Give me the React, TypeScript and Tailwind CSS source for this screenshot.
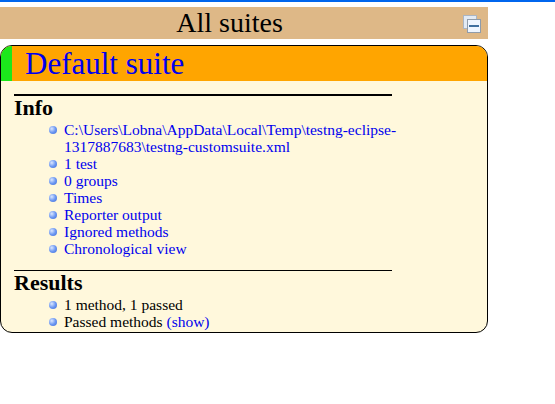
import React from "react"

const serif = { fontFamily: '"Liberation Serif", "Times New Roman", serif' }

function Bullet() {
  return (
    <span className="mt-[5px] mr-[7px] h-[8px] w-[8px] shrink-0 rounded-full bg-[radial-gradient(circle_at_35%_35%,#dbe7ff_0%,#6d98f2_50%,#3d6bd8_100%)]" />
  )
}

function Item({ children, link = true }: { children: React.ReactNode; link?: boolean }) {
  return (
    <li className="flex">
      <Bullet />
      <span className={link ? "text-[#0000ee]" : "text-black"}>{children}</span>
    </li>
  )
}

function CollapseIcon() {
  return (
    <svg width="18" height="18" viewBox="0 0 18 18">
      <rect x="0.5" y="0.5" width="13" height="13" fill="#e2eaf4" stroke="#aab5c3" />
      <rect x="4.5" y="4.5" width="13" height="13" fill="#eef5ff" stroke="#8f9cab" />
      <rect x="6" y="10" width="10" height="2" fill="#3f6f9f" />
    </svg>
  )
}

export default function App() {
  return (
    <div className="relative h-[404px] w-[555px] overflow-hidden bg-white" style={serif}>
      {/* focus line */}
      <div className="h-[2px] w-full bg-[#0066ee]" />

      {/* All suites bar */}
      <div className="mt-[5px] flex h-[32px] w-[488px] items-center bg-[#deb887]">
        <div className="flex-1 pr-[4px] text-center text-[28px] leading-none text-black">All suites</div>
        <div className="mr-[7px] mt-[2px]">
          <CollapseIcon />
        </div>
      </div>

      {/* Suite box */}
      <div className="mt-[6px] w-[488px] overflow-hidden rounded-[12px] border border-black bg-[#fff8dc]">
        <div className="flex h-[35px] items-stretch bg-[#ffa500]">
          <div className="w-[11px] bg-[#1ce81c]" />
          <div className="pl-[13px] text-[31px] leading-[36px] text-[#0000ee]">Default suite</div>
        </div>

        <div className="pl-[13px] pb-[2px]">
          <div className="mt-[13px] h-[1.5px] w-[378px] bg-black" />
          <h2 className="text-[22px] font-bold leading-[24px]">Info</h2>
          <ul className="ml-[35px] mt-[1px] whitespace-nowrap text-[15.5px] leading-[17px]">
            <Item>
              C:\Users\Lobna\AppData\Local\Temp\testng-eclipse-
              <br />
              1317887683\testng-customsuite.xml
            </Item>
            <Item>1 test</Item>
            <Item>0 groups</Item>
            <Item>Times</Item>
            <Item>Reporter output</Item>
            <Item>Ignored methods</Item>
            <Item>Chronological view</Item>
          </ul>

          <div className="mt-[13px] h-[1.5px] w-[378px] bg-black" />
          <h2 className="text-[22px] font-bold leading-[24px]">Results</h2>
          <ul className="ml-[35px] mt-[1px] whitespace-nowrap text-[15.5px] leading-[17px]">
            <Item link={false}>1 method, 1 passed</Item>
            <Item link={false}>
              Passed methods <span className="text-[#0000ee]">(show)</span>
            </Item>
          </ul>
        </div>
      </div>
    </div>
  )
}
